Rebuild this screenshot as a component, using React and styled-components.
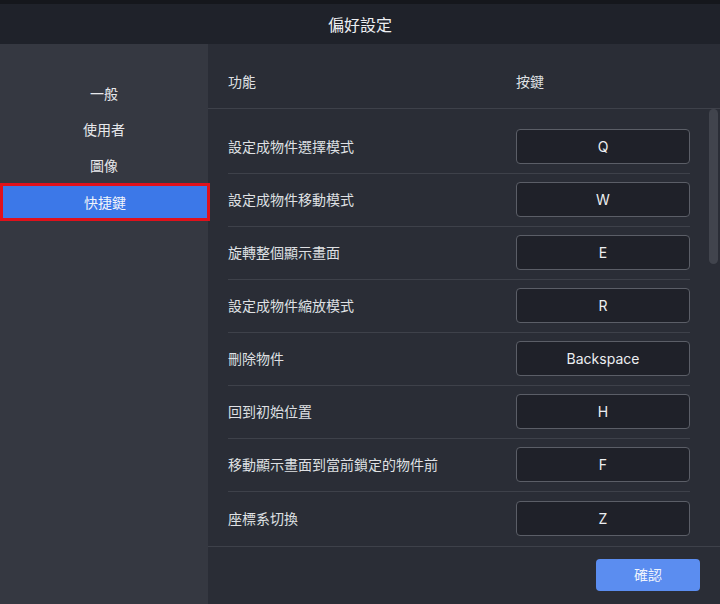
import styled, { createGlobalStyle } from 'styled-components'

const GlobalStyle = createGlobalStyle`
  html, body {
    margin: 0;
    padding: 0;
    background: #2a2d36;
  }
  body {
    font-family: "Noto Sans", "Noto Sans CJK TC", sans-serif;
  }
`

const S = {}

const menu = ['一般', '使用者', '圖像', '快捷鍵']

const shortcuts = [
  { label: '設定成物件選擇模式', key: 'Q' },
  { label: '設定成物件移動模式', key: 'W' },
  { label: '旋轉整個顯示畫面', key: 'E' },
  { label: '設定成物件縮放模式', key: 'R' },
  { label: '刪除物件', key: 'Backspace' },
  { label: '回到初始位置', key: 'H' },
  { label: '移動顯示畫面到當前鎖定的物件前', key: 'F' },
  { label: '座標系切換', key: 'Z' }
]

const App = () => {
  return (
    <>
      <GlobalStyle />
      <S.Page>
        <S.TopStrip />
        <S.Header>偏好設定</S.Header>
        <S.Body>
          <S.Sidebar>
            {menu.map((item) => (
              <S.MenuItem key={item} active={item === '快捷鍵'}>
                {item}
              </S.MenuItem>
            ))}
          </S.Sidebar>
          <S.Main>
            <S.ColumnHeader>
              <S.ColLabel>功能</S.ColLabel>
              <S.ColKey>按鍵</S.ColKey>
            </S.ColumnHeader>
            <S.ListArea>
              <S.List>
                {shortcuts.map((s) => (
                  <S.Row key={s.label}>
                    <S.Label>{s.label}</S.Label>
                    <S.KeyBox>{s.key}</S.KeyBox>
                  </S.Row>
                ))}
              </S.List>
              <S.ScrollThumb />
            </S.ListArea>
            <S.Footer>
              <S.ConfirmButton>確認</S.ConfirmButton>
            </S.Footer>
          </S.Main>
        </S.Body>
      </S.Page>
    </>
  )
}

export default App

S.Page = styled.div`
  width: 720px;
  height: 604px;
  display: flex;
  flex-direction: column;
  overflow: hidden;
  background: #2a2d36;
  color: #e4e5e8;
`
S.TopStrip = styled.div`
  height: 4px;
  background: #15171c;
`
S.Header = styled.div`
  height: 40px;
  display: flex;
  align-items: center;
  justify-content: center;
  background: #1f222a;
  font-size: 16px;
  color: #eceef1;
`
S.Body = styled.div`
  flex: 1;
  display: flex;
  min-height: 0;
`
S.Sidebar = styled.div`
  width: 208px;
  flex-shrink: 0;
  background: #353841;
  padding-top: 31px;
  display: flex;
  flex-direction: column;
  position: relative;
  z-index: 1;
`
S.MenuItem = styled.div`
  height: 36px;
  flex-shrink: 0;
  display: flex;
  align-items: center;
  justify-content: center;
  font-size: 14px;
  color: #e8e9ec;
  box-sizing: border-box;
  ${({ active }) => active && `
    width: 210px;
    height: 38px;
    background: #3c78e8;
    border: 3px solid #e0111b;
    color: #f2f5fb;
  `}
`
S.Main = styled.div`
  flex: 1;
  display: flex;
  flex-direction: column;
  min-width: 0;
`
S.ColumnHeader = styled.div`
  height: 65px;
  flex-shrink: 0;
  box-sizing: border-box;
  padding: 10px 30px 0 20px;
  display: flex;
  align-items: center;
  border-bottom: 1px solid #3e414a;
  font-size: 14px;
  color: #dfe0e3;
`
S.ColLabel = styled.div`
  flex: 1;
`
S.ColKey = styled.div`
  width: 174px;
`
S.ListArea = styled.div`
  flex: 1;
  min-height: 0;
  overflow: hidden;
  position: relative;
`
S.List = styled.div`
  padding: 12px 30px 0 20px;
`
S.Row = styled.div`
  height: 53px;
  box-sizing: border-box;
  display: flex;
  align-items: center;
  border-bottom: 1px solid #3e414a;
  &:last-child {
    border-bottom: none;
  }
`
S.Label = styled.div`
  flex: 1;
  margin-top: -2px;
  font-size: 14px;
  color: #dfe0e3;
`
S.KeyBox = styled.div`
  width: 174px;
  height: 35px;
  box-sizing: border-box;
  display: flex;
  align-items: center;
  justify-content: center;
  background: #1f2129;
  border: 1px solid #5b5e67;
  border-radius: 4px;
  font-family: Inter, "Noto Sans", sans-serif;
  font-size: 14px;
  color: #eceef1;
  margin-top: -1px;
`
S.ScrollThumb = styled.div`
  position: absolute;
  top: 0;
  right: 2px;
  width: 9px;
  height: 155px;
  border-radius: 5px;
  background: #41444d;
`
S.Footer = styled.div`
  height: 58px;
  flex-shrink: 0;
  box-sizing: border-box;
  padding: 12px 20px 0 0;
  display: flex;
  justify-content: flex-end;
  align-items: flex-start;
  border-top: 1px solid #3e414a;
`
S.ConfirmButton = styled.button`
  width: 104px;
  height: 32px;
  border: none;
  border-radius: 4px;
  background: #5b8df0;
  color: #eef3fd;
  font-family: inherit;
  font-size: 14px;
  line-height: 1;
  padding: 0;
  cursor: pointer;
`
